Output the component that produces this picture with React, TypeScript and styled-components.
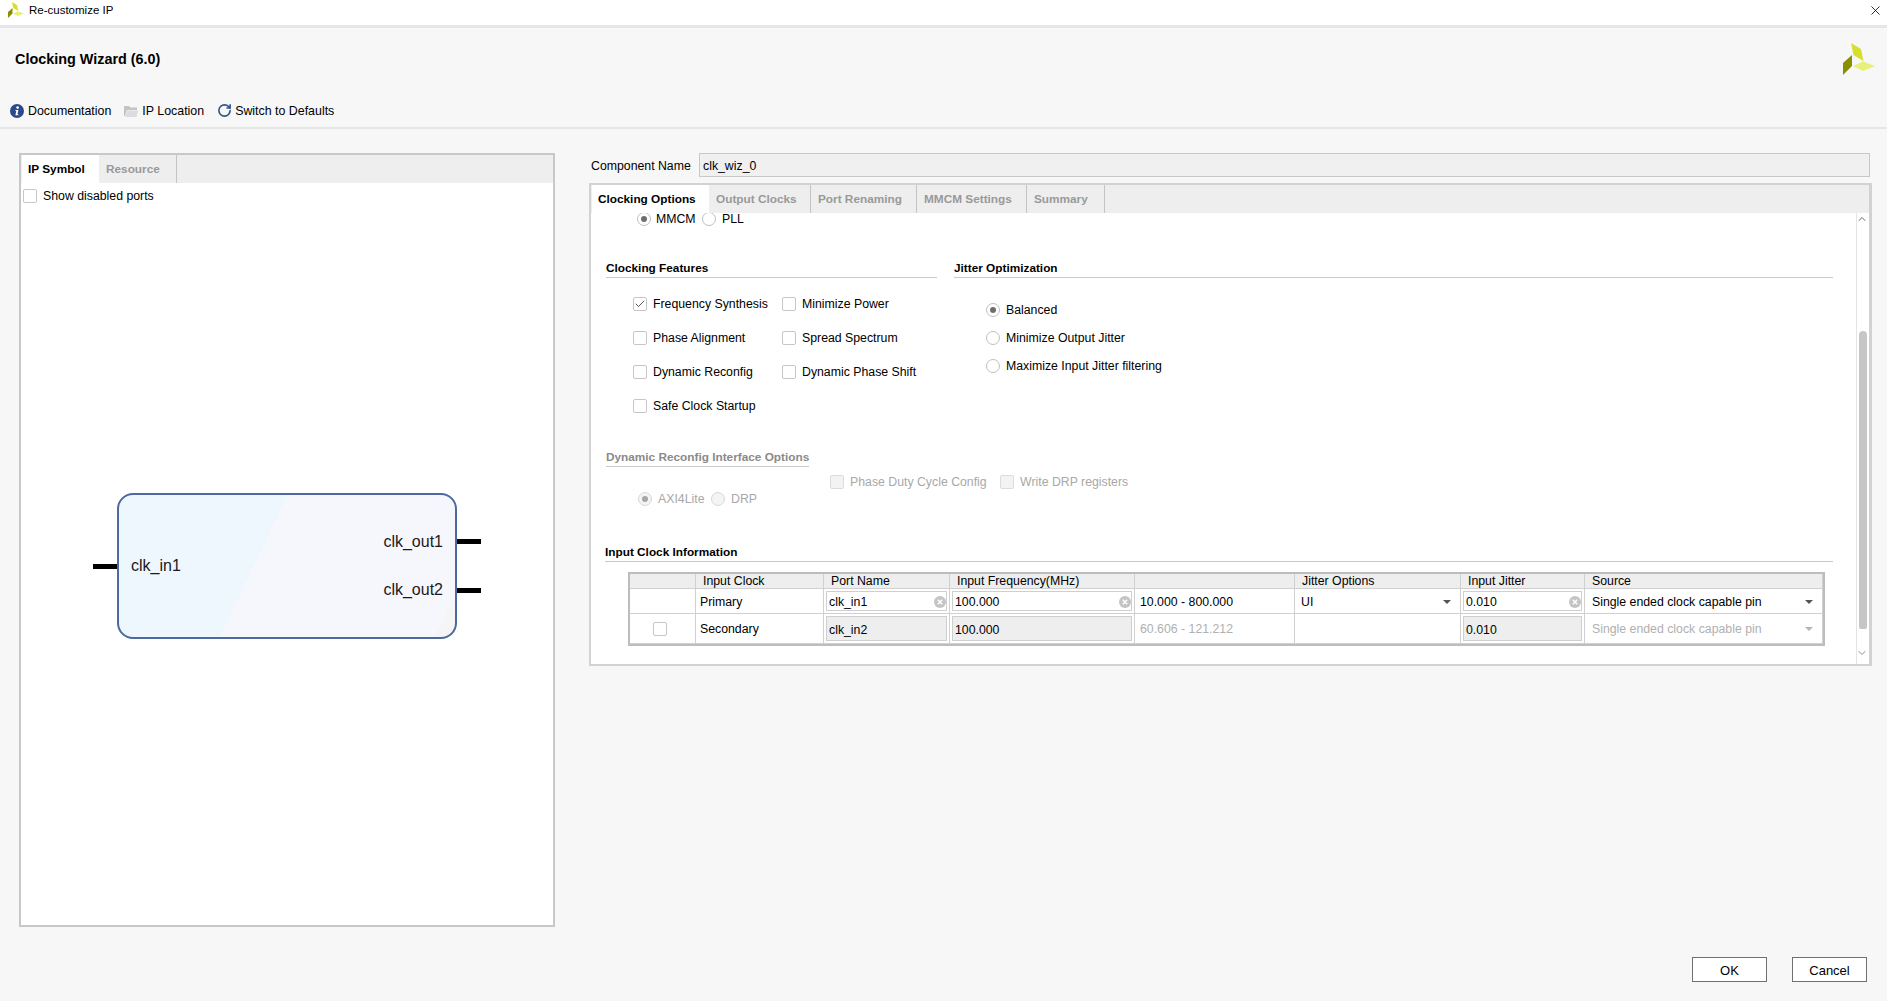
import React from 'react'
import styled, { createGlobalStyle } from 'styled-components'
import { X, RotateCw, ChevronUp, ChevronDown, Check } from 'lucide-react'

const GlobalStyle = createGlobalStyle`
  html, body {
    margin: 0;
    padding: 0;
    background: #f7f7f7;
  }
  * {
    box-sizing: border-box;
  }
`

const Page = styled.div`
  width: 1887px;
  height: 1001px;
  display: flex;
  flex-direction: column;
  overflow: hidden;
  background: #f7f7f7;
  color: #000;
  font-family: 'Liberation Sans', Arial, sans-serif;
  font-size: 12.3px;
`

const TitleBar = styled.div`
  height: 28px;
  flex: none;
  display: flex;
  align-items: center;
  gap: 5px;
  padding: 0 4px 5px 8px;
  background: #fff;
  border-bottom: 3px solid #e6e6e6;
`

const TitleText = styled.span`
  flex: 1;
  font-size: 11.5px;
`

const Header = styled.div`
  height: 101px;
  flex: none;
  border-bottom: 2px solid #e6e6e6;
`

const HeaderTop = styled.div`
  height: 62px;
  display: flex;
  align-items: center;
  justify-content: space-between;
  padding: 0 12px 0 15px;
`

const Heading = styled.div`
  font-size: 14.4px;
  font-weight: bold;
`

const Toolbar = styled.div`
  height: 37px;
  margin-top: 2px;
  display: flex;
  align-items: center;
  gap: 13px;
  padding-left: 10px;
  font-size: 12.4px;
`

const ToolItem = styled.div<{ $gap?: number }>`
  display: flex;
  align-items: center;
  gap: ${(p) => p.$gap ?? 4}px;
`

const Main = styled.div`
  flex: 1;
  min-height: 0;
  display: flex;
  align-items: flex-start;
  gap: 34px;
  padding: 24px 15px 0 19px;
`

const SidePanel = styled.div`
  width: 536px;
  height: 774px;
  flex: none;
  background: #fff;
  border: 2px solid #c8c8c8;
`

const TabStrip = styled.div`
  height: 28px;
  display: flex;
  background: #eeeeee;
  padding-left: 1px;
`

const Tab = styled.div<{ $active?: boolean; $width: number }>`
  width: ${(p) => p.$width}px;
  display: flex;
  align-items: center;
  padding-left: ${(p) => (p.$active ? 6 : 7)}px;
  font-size: 11.8px;
  font-weight: bold;
  white-space: nowrap;
  color: ${(p) => (p.$active ? '#000' : '#999')};
  background: ${(p) => (p.$active ? '#fff' : 'transparent')};
  border-right: ${(p) => (p.$active ? 'none' : '1px solid #c4c4c4')};
`

const DisabledPorts = styled.label`
  display: flex;
  align-items: center;
  gap: 6px;
  margin: 5px 0 0 2px;
  padding-top: 1px;
`

const SymbolArea = styled.div`
  display: flex;
  align-items: center;
  padding-left: 72px;
  margin-top: 290px;
`

const Pin = styled.div`
  width: 24px;
  height: 5px;
  background: #000;
`

const SymbolBox = styled.div`
  width: 340px;
  height: 146px;
  border: 2px solid #4a6aa0;
  border-radius: 16px;
  background: linear-gradient(
    115.4deg,
    #eef6fe 41.7%,
    #f6f6fd 41.7%,
    #f6f6fd 95%,
    #f5f5f5 95%
  );
  display: flex;
  justify-content: space-between;
  align-items: center;
  padding: 0 12px 0 12px;
  font-size: 16px;
  color: #1a1a1a;
`

const OutputPorts = styled.div`
  display: flex;
  flex-direction: column;
  align-items: flex-end;
  gap: 30px;
`

const OutputPins = styled.div`
  display: flex;
  flex-direction: column;
  gap: 44px;
`

const RightColumn = styled.div`
  flex: 1;
  min-width: 0;
`

const NameRow = styled.div`
  display: flex;
  align-items: center;
  gap: 7px;
  padding: 0 2px;
`

const NameLabel = styled.span`
  width: 101px;
  padding-top: 1px;
`

const NameField = styled.div`
  flex: 1;
  height: 24px;
  display: flex;
  align-items: center;
  padding: 1px 0 0 3px;
  background: #f0f0f0;
  border: 1px solid #c8c8c8;
`

const TabPanel = styled.div`
  margin-top: 6px;
  height: 483px;
  border: 2px solid #d2d2d2;
  border-right-width: 3px;
  background: #fff;
  display: flex;
  flex-direction: column;
`

const ScrollRow = styled.div`
  flex: 1;
  min-height: 0;
  display: flex;
`

const Content = styled.div`
  flex: 1;
  min-width: 0;
  overflow: hidden;
  padding: 0 23px 0 15px;
`

const ModeRow = styled.div`
  height: 14px;
  margin-top: -1px;
  padding-left: 31px;
  display: flex;
  align-items: center;
`

const FeatureRow = styled.div`
  display: flex;
  gap: 17px;
  margin-top: 32px;
`

const FeatureColumn = styled.div<{ $width?: number }>`
  ${(p) => (p.$width ? `width: ${p.$width}px;` : 'flex: 1;')}
`

const SectionTitle = styled.div<{ $muted?: boolean }>`
  height: 20px;
  display: flex;
  align-items: center;
  font-size: 11.8px;
  font-weight: bold;
  white-space: nowrap;
  border-bottom: 1px solid #c9c9c9;
  color: ${(p) => (p.$muted ? '#8a8a8a' : '#000')};
`

const FeatureGrid = styled.div`
  margin-top: 9px;
  padding-left: 27px;
  display: grid;
  grid-template-columns: 149px 1fr;
  grid-auto-rows: 34px;
  align-items: center;
`

const JitterList = styled.div`
  margin-top: 18px;
  padding-left: 32px;
  display: grid;
  grid-auto-rows: 28.2px;
  align-items: center;
`

const Choice = styled.div<{ $width?: number; $disabled?: boolean; $gap?: number }>`
  display: flex;
  align-items: center;
  gap: ${(p) => p.$gap ?? 6}px;
  ${(p) => (p.$width ? `width: ${p.$width}px;` : '')}
  color: ${(p) => (p.$disabled ? '#a8a8a8' : '#000')};
`

const CheckBox = styled.span<{ $disabled?: boolean }>`
  width: 14px;
  height: 14px;
  flex: none;
  display: flex;
  align-items: center;
  justify-content: center;
  border: 1px solid ${(p) => (p.$disabled ? '#dcdcdc' : '#c6c6c6')};
  border-radius: 2px;
  background: ${(p) => (p.$disabled ? '#f3f3f3' : '#fff')};
  color: #444;
`

const Radio = styled.span<{ $on?: boolean; $disabled?: boolean }>`
  width: 14px;
  height: 14px;
  flex: none;
  display: flex;
  align-items: center;
  justify-content: center;
  border: 1px solid ${(p) => (p.$disabled ? '#d8d8d8' : '#c0c0c0')};
  border-radius: 50%;
  background: ${(p) => (p.$disabled ? '#f4f4f4' : '#fff')};

  &::after {
    content: '';
    display: ${(p) => (p.$on ? 'block' : 'none')};
    width: 6px;
    height: 6px;
    border-radius: 50%;
    background: ${(p) => (p.$disabled ? '#a6a6a6' : '#6e6e6e')};
  }
`

const DynamicTitle = styled.div`
  width: 203px;
  margin-top: 24px;
`

const DynamicBody = styled.div`
  display: flex;
`

const InterfaceGroup = styled.div`
  width: 224px;
  padding: 25px 0 0 32px;
  display: flex;
  align-items: flex-start;
  height: 39px;
`

const RegisterGroup = styled.div`
  padding-top: 8px;
  display: flex;
  align-items: flex-start;
`

const InputClockTitle = styled.div`
  margin: 36px 0 0 -1px;
`

const Table = styled.div`
  width: 1197px;
  margin: 10px 0 0 22px;
  border: 2px solid #bdbdbd;
  display: grid;
  grid-template-columns: 66px 128px 126px 185px 160px 166px 124px 238px;
  grid-template-rows: 15px 25px 30px;
`

const HeadCell = styled.div`
  display: flex;
  align-items: center;
  padding: 1px 0 0 7px;
  background: #eeeeee;
  border-right: 1px solid #d0d0d0;
  border-bottom: 1px solid #d0d0d0;
  line-height: 1;
`

const Cell = styled.div<{ $center?: boolean; $muted?: boolean; $pad?: number }>`
  display: flex;
  align-items: center;
  justify-content: ${(p) => (p.$center ? 'center' : 'space-between')};
  padding: ${(p) => (p.$center ? '0 5px 0 0' : `1px 9px 0 ${p.$pad ?? 4}px`)};
  white-space: nowrap;
  color: ${(p) => (p.$muted ? '#b0b0b0' : '#000')};
  border-right: 1px solid #d0d0d0;
  border-bottom: 1px solid #d0d0d0;
`

const FieldCell = styled.div`
  padding: 2px;
  border-right: 1px solid #d0d0d0;
  border-bottom: 1px solid #d0d0d0;
  display: flex;
`

const Field = styled.div<{ $readOnly?: boolean }>`
  flex: 1;
  display: flex;
  align-items: center;
  justify-content: space-between;
  padding: 2px 0 0 2px;
  background: ${(p) => (p.$readOnly ? '#eeeeee' : '#fff')};
  border: 1px solid #cfcfcf;
`

const Caret = styled.span<{ $muted?: boolean }>`
  width: 0;
  height: 0;
  border-left: 4px solid transparent;
  border-right: 4px solid transparent;
  border-top: 4px solid ${(p) => (p.$muted ? '#b5b5b5' : '#555')};
`

const ScrollBar = styled.div`
  width: 13px;
  flex: none;
  position: relative;
  border-left: 1px solid #e4e4e4;
  color: #666;
`

const ScrollEnd = styled.div<{ $bottom?: boolean }>`
  position: absolute;
  left: -1px;
  ${(p) => (p.$bottom ? 'bottom: 2px;' : 'top: 0;')}
`

const ScrollThumb = styled.div`
  position: absolute;
  left: 2px;
  top: 118px;
  width: 8px;
  height: 298px;
  border-radius: 4px 4px 2px 2px;
  background: #c6c6c6;
`

const Footer = styled.div`
  height: 44px;
  flex: none;
  display: flex;
  justify-content: flex-end;
  align-items: flex-start;
  gap: 25px;
  padding-right: 20px;
`

const Button = styled.button`
  width: 75px;
  height: 25px;
  padding: 1px 0 0;
  background: #fff;
  border: 1.5px solid #707070;
  font-family: inherit;
  font-size: 13px;
  color: #000;
`

const XilinxLogo: React.FC<{ size: number }> = ({ size }) => (
  <svg width={size} height={size} viewBox="0 0 32 32">
    <path d="M8 0 18 6 20.5 18 10.5 12Z" fill="#d6e02c" />
    <path d="M0 20 9 12 9 23 0 32Z" fill="#8a8f00" />
    <path d="M10 23 20 18.5 32 23 20 28Z" fill="#e8ef7a" />
  </svg>
)

const InfoIcon = () => (
  <svg width="14" height="14" viewBox="0 0 14 14">
    <circle cx="7" cy="7" r="7" fill="#2b4a8b" />
    <circle cx="7.6" cy="3.6" r="1.3" fill="#fff" />
    <path d="M5.6 6h2.8L7.4 10.2h1V11.2H5.4L6.3 7H5.4Z" fill="#fff" />
  </svg>
)

const FolderIcon = () => (
  <svg width="14" height="14" viewBox="0 0 14 14">
    <path d="M0 2h5l1.5 1.5H13V6H3L1 12H0Z" fill="#c4c4c4" />
    <path d="M3.4 6.6H14L12.4 13H1.2Z" fill="#dcdcdc" />
  </svg>
)

const ClearIcon = () => (
  <svg width="12" height="12" viewBox="0 0 12 12">
    <circle cx="6" cy="6" r="6" fill="#c4c4c4" />
    <path d="M3.8 3.8 8.2 8.2M8.2 3.8 3.8 8.2" stroke="#fff" strokeWidth="1.5" />
  </svg>
)

const headColumns = ['', 'Input Clock', 'Port Name', 'Input Frequency(MHz)', '', 'Jitter Options', 'Input Jitter', 'Source']

const App: React.FC = () => (
  <Page>
    <GlobalStyle />
    <TitleBar>
      <XilinxLogo size={16} />
      <TitleText>Re-customize IP</TitleText>
      <X size={15} strokeWidth={1.3} />
    </TitleBar>

    <Header>
      <HeaderTop>
        <Heading>Clocking Wizard (6.0)</Heading>
        <XilinxLogo size={32} />
      </HeaderTop>
      <Toolbar>
        <ToolItem>
          <InfoIcon />
          Documentation
        </ToolItem>
        <ToolItem>
          <FolderIcon />
          IP Location
        </ToolItem>
        <ToolItem $gap={3}>
          <RotateCw size={15} strokeWidth={2.6} color="#2f5486" />
          Switch to Defaults
        </ToolItem>
      </Toolbar>
    </Header>

    <Main>
      <SidePanel>
        <TabStrip>
          <Tab $active $width={77}>IP Symbol</Tab>
          <Tab $width={78}>Resource</Tab>
        </TabStrip>
        <DisabledPorts>
          <CheckBox />
          Show disabled ports
        </DisabledPorts>
        <SymbolArea>
          <Pin />
          <SymbolBox>
            clk_in1
            <OutputPorts>
              <span>clk_out1</span>
              <span>clk_out2</span>
            </OutputPorts>
          </SymbolBox>
          <OutputPins>
            <Pin />
            <Pin />
          </OutputPins>
        </SymbolArea>
      </SidePanel>

      <RightColumn>
        <NameRow>
          <NameLabel>Component Name</NameLabel>
          <NameField>clk_wiz_0</NameField>
        </NameRow>

        <TabPanel>
          <TabStrip>
            <Tab $active $width={117}>Clocking Options</Tab>
            <Tab $width={102}>Output Clocks</Tab>
            <Tab $width={106}>Port Renaming</Tab>
            <Tab $width={110}>MMCM Settings</Tab>
            <Tab $width={78}>Summary</Tab>
          </TabStrip>
          <ScrollRow>
            <Content>
              <ModeRow>
                <Choice $width={65} $gap={5}>
                  <Radio $on />
                  MMCM
                </Choice>
                <Choice>
                  <Radio />
                  PLL
                </Choice>
              </ModeRow>

              <FeatureRow>
                <FeatureColumn $width={331}>
                  <SectionTitle>Clocking Features</SectionTitle>
                  <FeatureGrid>
                    <Choice>
                      <CheckBox><Check size={12} strokeWidth={1.8} /></CheckBox>
                      Frequency Synthesis
                    </Choice>
                    <Choice><CheckBox />Minimize Power</Choice>
                    <Choice><CheckBox />Phase Alignment</Choice>
                    <Choice><CheckBox />Spread Spectrum</Choice>
                    <Choice><CheckBox />Dynamic Reconfig</Choice>
                    <Choice><CheckBox />Dynamic Phase Shift</Choice>
                    <Choice><CheckBox />Safe Clock Startup</Choice>
                  </FeatureGrid>
                </FeatureColumn>
                <FeatureColumn>
                  <SectionTitle>Jitter Optimization</SectionTitle>
                  <JitterList>
                    <Choice><Radio $on />Balanced</Choice>
                    <Choice><Radio />Minimize Output Jitter</Choice>
                    <Choice><Radio />Maximize Input Jitter filtering</Choice>
                  </JitterList>
                </FeatureColumn>
              </FeatureRow>

              <DynamicTitle>
                <SectionTitle $muted>Dynamic Reconfig Interface Options</SectionTitle>
              </DynamicTitle>
              <DynamicBody>
                <InterfaceGroup>
                  <Choice $disabled $width={73}><Radio $on $disabled />AXI4Lite</Choice>
                  <Choice $disabled><Radio $disabled />DRP</Choice>
                </InterfaceGroup>
                <RegisterGroup>
                  <Choice $disabled $width={170}><CheckBox $disabled />Phase Duty Cycle Config</Choice>
                  <Choice $disabled><CheckBox $disabled />Write DRP registers</Choice>
                </RegisterGroup>
              </DynamicBody>

              <InputClockTitle>
                <SectionTitle>Input Clock Information</SectionTitle>
              </InputClockTitle>
              <Table>
                {headColumns.map((label, i) => (
                  <HeadCell key={i}>{label}</HeadCell>
                ))}

                <Cell />
                <Cell>Primary</Cell>
                <FieldCell><Field>clk_in1<ClearIcon /></Field></FieldCell>
                <FieldCell><Field>100.000<ClearIcon /></Field></FieldCell>
                <Cell $pad={5}>10.000 - 800.000</Cell>
                <Cell $pad={6}>UI<Caret /></Cell>
                <FieldCell><Field>0.010<ClearIcon /></Field></FieldCell>
                <Cell $pad={7}>Single ended clock capable pin<Caret /></Cell>

                <Cell $center><CheckBox /></Cell>
                <Cell>Secondary</Cell>
                <FieldCell><Field $readOnly>clk_in2</Field></FieldCell>
                <FieldCell><Field $readOnly>100.000</Field></FieldCell>
                <Cell $muted $pad={5}>60.606 - 121.212</Cell>
                <Cell />
                <FieldCell><Field $readOnly>0.010</Field></FieldCell>
                <Cell $muted $pad={7}>Single ended clock capable pin<Caret $muted /></Cell>
              </Table>
            </Content>
            <ScrollBar>
              <ScrollEnd><ChevronUp size={12} strokeWidth={2} /></ScrollEnd>
              <ScrollThumb />
              <ScrollEnd $bottom><ChevronDown size={12} strokeWidth={1.5} /></ScrollEnd>
            </ScrollBar>
          </ScrollRow>
        </TabPanel>
      </RightColumn>
    </Main>

    <Footer>
      <Button>OK</Button>
      <Button>Cancel</Button>
    </Footer>
  </Page>
)

export default App
